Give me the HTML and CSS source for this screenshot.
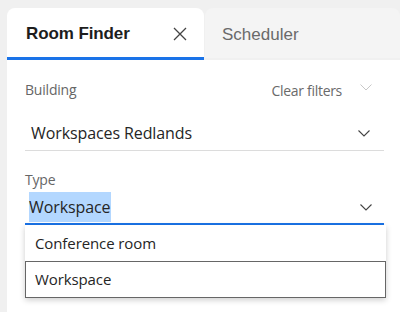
FILE: index.html
```html
<!DOCTYPE html>
<html lang="en">
  <head>
    <meta charset="UTF-8" />
    <meta name="viewport" content="width=device-width, initial-scale=1.0" />
    <title>Room Finder</title>
    <link rel="stylesheet" href="styles.css">
  </head>
  <body>
    <div class="shell">
      <div class="tabs">
        <div class="tab tab-active">
          <span class="tab-title">Room Finder</span>
          <svg class="tab-close" width="14" height="14" viewBox="0 0 14 14">
            <path d="M1 1 L13 13 M13 1 L1 13" stroke="#444" stroke-width="1.3" fill="none" />
          </svg>
        </div>
        <div class="tab tab-idle">
          <span class="tab-title">Scheduler</span>
        </div>
      </div>

      <div class="panel">
        <div class="field-head">
          <span class="label">Building</span>
          <span class="clear">Clear filters
            <svg width="12" height="7" viewBox="0 0 12 7">
              <path d="M0.5 0.5 L6 6 L11.5 0.5" stroke="#c8c8c8" stroke-width="1" fill="none" />
            </svg>
          </span>
        </div>
        <div class="select">
          <span class="select-value">Workspaces Redlands</span>
          <svg class="chevron" width="12" height="7" viewBox="0 0 12 7">
            <path d="M0.5 0.5 L6 6 L11.5 0.5" stroke="#444" stroke-width="1.1" fill="none" />
          </svg>
        </div>

        <div class="field-head field-type">
          <span class="label">Type</span>
        </div>
        <div class="select select-open">
          <span class="select-value"><span class="selected-text">Workspace</span></span>
          <svg class="chevron" width="12" height="7" viewBox="0 0 12 7">
            <path d="M0.5 0.5 L6 6 L11.5 0.5" stroke="#444" stroke-width="1.1" fill="none" />
          </svg>
          <ul class="options">
            <li class="option">Conference room</li>
            <li class="option option-focus">Workspace</li>
          </ul>
        </div>
      </div>
    </div>
  </body>
</html>
```

FILE: styles.css
```css
body {
  margin: 0;
  background-color: #f0f0f0;
  font-family: "Open Sans", "Noto Sans", sans-serif;
  color: #252525;
}
.shell {
  padding: 8px 0 0 7px;
  height: 304px;
  display: flex;
  flex-direction: column;
}
.tabs {
  display: flex;
  height: 52px;
}
.tab {
  display: flex;
  align-items: center;
  border-radius: 8px 8px 0 0;
  font-family: "Liberation Sans", Arial, sans-serif;
  font-size: 17px;
  padding-top: 3px;
  box-sizing: border-box;
}
.tab-active {
  width: 197px;
  padding-left: 19px;
  padding-right: 17px;
  background-color: white;
  border-bottom: 3px solid #1a73e8;
  justify-content: space-between;
}
.tab-active .tab-title {
  font-weight: bold;
  color: #1d1d1d;
  letter-spacing: -0.1px;
}
.tab-idle {
  flex: 1;
  margin-left: 1px;
  padding-left: 17px;
  background-color: #f4f4f4;
  color: #6a6a6a;
  margin-bottom: 2px;
}
.panel {
  flex: 1;
  background-color: white;
  padding: 18px 16px 0 18px;
}
.field-head {
  display: flex;
  justify-content: space-between;
  align-items: center;
  font-size: 14px;
  letter-spacing: -0.2px;
  color: #666;
  height: 22px;
}
.clear {
  display: flex;
  align-items: center;
  gap: 18px;
  color: #6a6a6a;
  padding-right: 12px;
  margin-top: 2px;
  letter-spacing: -0.3px;
}
.clear svg {
  margin-top: -5px;
}
.select {
  position: relative;
  display: flex;
  align-items: center;
  justify-content: space-between;
  height: 34px;
  border-bottom: 1px solid #dcdcdc;
  padding: 0 14px 0 6px;
  margin-top: 16px;
  font-size: 16px;
  letter-spacing: -0.1px;
}
.field-type {
  margin-top: 17px;
}
.select-open {
  margin-top: 1px;
  height: 32px;
  padding-left: 4px;
  padding-right: 12px;
  border-bottom: 2px solid #1a73e8;
}
.selected-text {
  background-color: #b3d7ff;
  padding: 4px 1px 4px 0;
}
.options {
  position: absolute;
  top: 34px;
  left: 0;
  right: -2px;
  margin: 0;
  padding: 0;
  list-style: none;
  background-color: white;
  box-shadow: 0 2px 6px rgba(0, 0, 0, 0.2);
}
.option {
  height: 36px;
  line-height: 36px;
  padding-left: 10px;
  font-size: 15px;
}
.option-focus {
  border: 1px solid #666;
  padding-left: 9px;
  line-height: 35px;
  height: 35px;
}
```
